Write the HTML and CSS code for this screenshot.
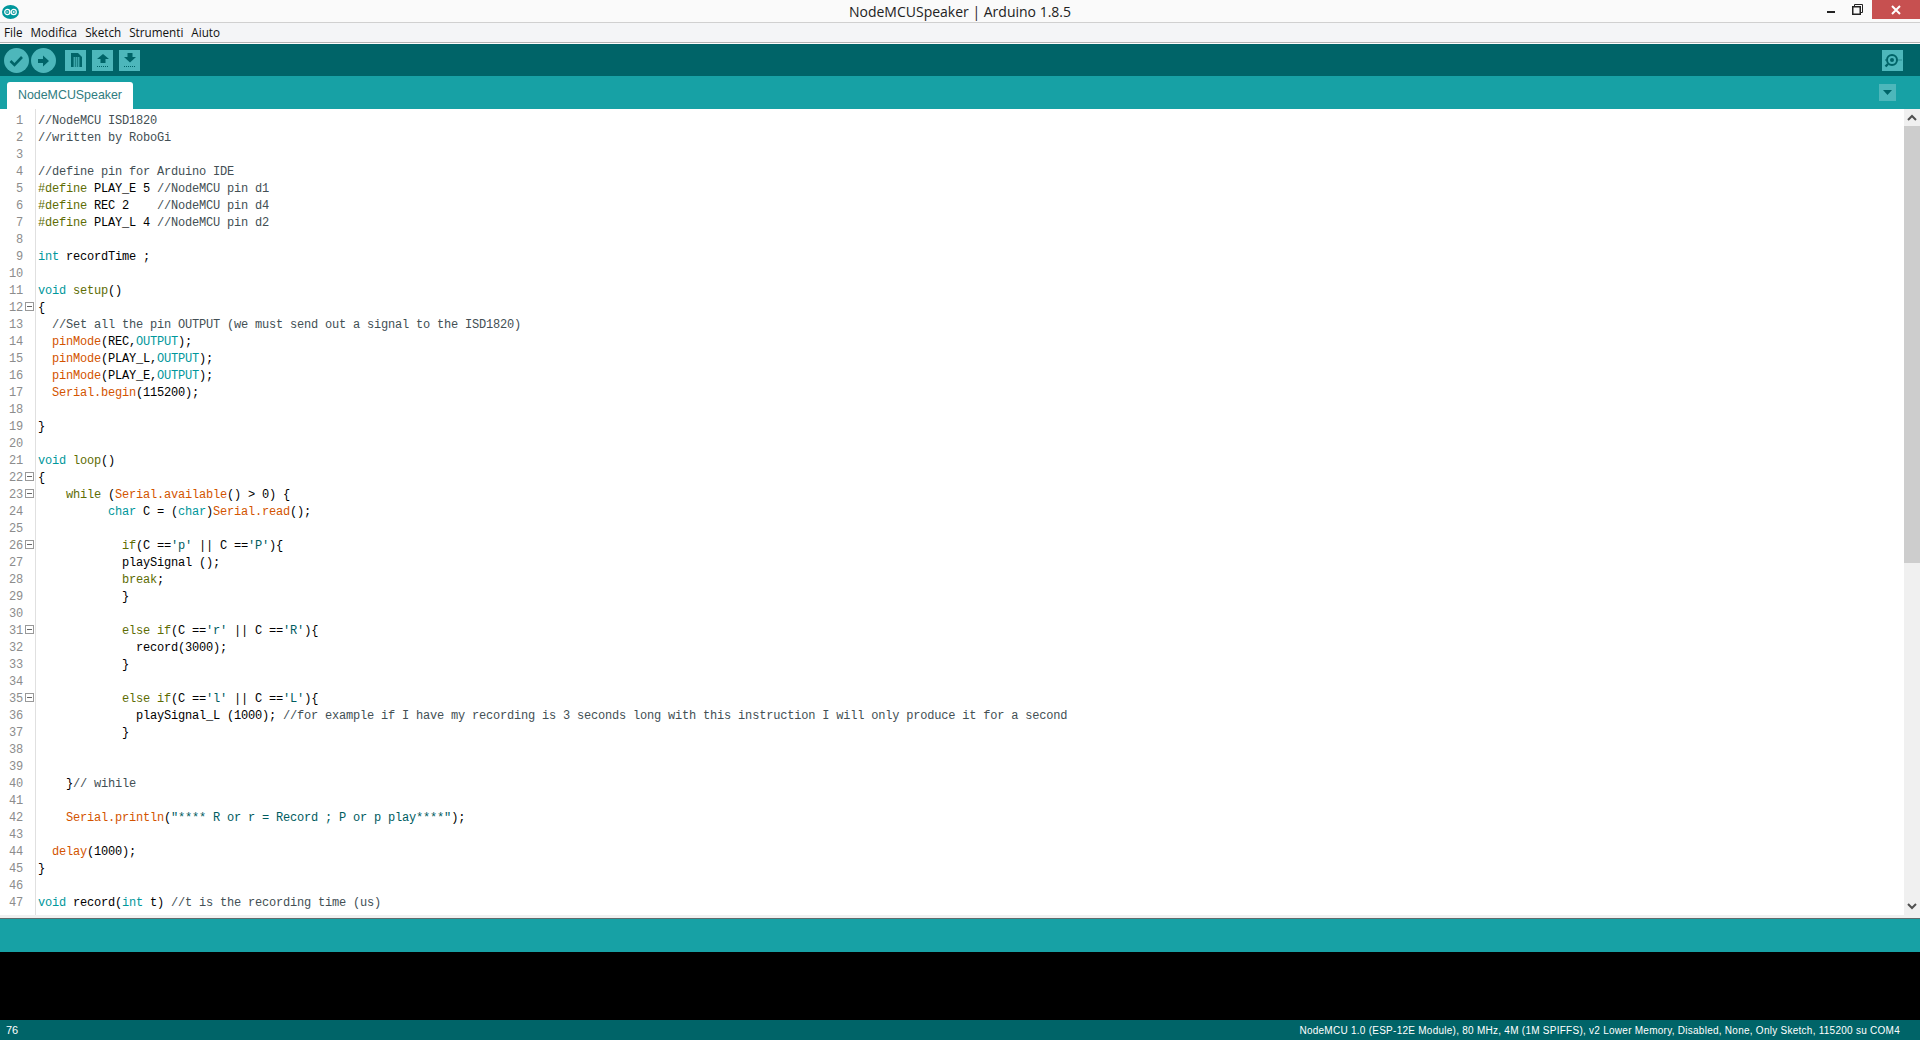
FILE: index.html
```html
<!DOCTYPE html>
<html lang="en">
<head>
    <meta charset="UTF-8">
    <meta name="viewport" content="width=device-width, initial-scale=1.0">
    <link rel="stylesheet" href="styles.css">
    <title>NodeMCUSpeaker | Arduino 1.8.5</title>
</head>
<body>

    <div class="titlebar">
        <div class="title-left">
            <svg class="app-logo" width="17" height="14" viewBox="0 0 17 14">
                <ellipse cx="8.5" cy="7" rx="8.5" ry="7" fill="#00979c"/>
                <circle cx="5.3" cy="7" r="2.6" fill="none" stroke="#fff" stroke-width="1.2"/>
                <circle cx="11.7" cy="7" r="2.6" fill="none" stroke="#fff" stroke-width="1.2"/>
                <path d="M4.2 7h2.2M10.6 7h2.2M11.7 5.9v2.2" stroke="#fff" stroke-width="0.8"/>
            </svg>
        </div>
        <div class="title-text">NodeMCUSpeaker | Arduino 1.8.5</div>
        <div class="window-controls">
            <span class="win-min"></span>
            <svg class="win-restore" width="11" height="11" viewBox="0 0 11 11">
                <path d="M2.5 2.5V.5h8v8h-2" fill="none" stroke="#222" stroke-width="1"/>
                <rect x="0.75" y="2.75" width="7.5" height="7.5" fill="none" stroke="#222" stroke-width="1.5"/>
            </svg>
            <span class="win-close">
                <svg width="10" height="10" viewBox="0 0 10 10">
                    <path d="M1 1l8 8M9 1l-8 8" stroke="#fff" stroke-width="2"/>
                </svg>
            </span>
        </div>
    </div>

    <div class="menubar">
        <span class="menu-item">File</span>
        <span class="menu-item">Modifica</span>
        <span class="menu-item">Sketch</span>
        <span class="menu-item">Strumenti</span>
        <span class="menu-item">Aiuto</span>
    </div>

    <div class="toolbar">
        <div class="tool round">
            <svg width="25" height="25" viewBox="0 0 25 25"><path d="M6.500 13l4 4 7.500-8" fill="none" stroke="#006468" stroke-width="2.600"/></svg>
        </div>
        <div class="tool round">
            <svg width="25" height="25" viewBox="0 0 25 25"><path d="M7 11h5V7.500l6 5.500-6 5.500V15H7z" fill="#006468"/></svg>
        </div>
        <div class="tool square first-square">
            <svg width="21" height="21" viewBox="0 0 21 21">
                <path d="M6 3h7l4 4v10H6z" fill="#006468"/>
                <path d="M8 8h7M8 10h7M8 12h7M8 14h7M8 16h7M9.500 7v10M11.500 7v10M13.500 7v10" stroke="#4db7bb" stroke-width="0.700"/>
            </svg>
        </div>
        <div class="tool square">
            <svg width="21" height="21" viewBox="0 0 21 21">
                <path d="M11 4l6 5h-3.500v4h-5V9H5z" fill="#006468"/>
                <path d="M5 16.500h12" stroke="#006468" stroke-width="1" stroke-dasharray="1 1"/>
            </svg>
        </div>
        <div class="tool square">
            <svg width="21" height="21" viewBox="0 0 21 21">
                <path d="M8.500 3h5v4H17l-6 5.500L5 7h3.500z" fill="#006468"/>
                <path d="M5 16.500h12" stroke="#006468" stroke-width="1" stroke-dasharray="1 1"/>
            </svg>
        </div>
        <div class="tool square monitor">
            <svg width="21" height="21" viewBox="0 0 21 21">
                <circle cx="10" cy="10" r="5" fill="none" stroke="#006468" stroke-width="2"/>
                <circle cx="10" cy="10" r="2" fill="#006468"/>
                <path d="M6 14l-2.500 2.500" stroke="#006468" stroke-width="2.400"/>
                <path d="M3 10h1M16.500 10h4" stroke="#006468" stroke-width="1" stroke-dasharray="1 1"/>
            </svg>
        </div>
    </div>

    <div class="tabbar">
        <div class="tab">NodeMCUSpeaker</div>
        <div class="tab-menu">
            <svg width="17" height="17" viewBox="0 0 17 17"><path d="M4 6h9l-4.500 5z" fill="#006468"/></svg>
        </div>
    </div>

    <div class="editor">
        <div class="gutter">
            <div class="num">1</div>
            <div class="num">2</div>
            <div class="num">3</div>
            <div class="num">4</div>
            <div class="num">5</div>
            <div class="num">6</div>
            <div class="num">7</div>
            <div class="num">8</div>
            <div class="num">9</div>
            <div class="num">10</div>
            <div class="num">11</div>
            <div class="num fold">12</div>
            <div class="num">13</div>
            <div class="num">14</div>
            <div class="num">15</div>
            <div class="num">16</div>
            <div class="num">17</div>
            <div class="num">18</div>
            <div class="num">19</div>
            <div class="num">20</div>
            <div class="num">21</div>
            <div class="num fold">22</div>
            <div class="num fold">23</div>
            <div class="num">24</div>
            <div class="num">25</div>
            <div class="num fold">26</div>
            <div class="num">27</div>
            <div class="num">28</div>
            <div class="num">29</div>
            <div class="num">30</div>
            <div class="num fold">31</div>
            <div class="num">32</div>
            <div class="num">33</div>
            <div class="num">34</div>
            <div class="num fold">35</div>
            <div class="num">36</div>
            <div class="num">37</div>
            <div class="num">38</div>
            <div class="num">39</div>
            <div class="num">40</div>
            <div class="num">41</div>
            <div class="num">42</div>
            <div class="num">43</div>
            <div class="num">44</div>
            <div class="num">45</div>
            <div class="num">46</div>
            <div class="num">47</div>
        </div>
<pre class="code"><i>//NodeMCU ISD1820</i>
<i>//written by RoboGi</i>

<i>//define pin for Arduino IDE</i>
<u>#define</u> PLAY_E 5 <i>//NodeMCU pin d1</i>
<u>#define</u> REC 2    <i>//NodeMCU pin d4</i>
<u>#define</u> PLAY_L 4 <i>//NodeMCU pin d2</i>

<b>int</b> recordTime ;

<b>void</b> <u>setup</u>()
{
  <i>//Set all the pin OUTPUT (we must send out a signal to the ISD1820)</i>
  <em>pinMode</em>(REC,<b>OUTPUT</b>);
  <em>pinMode</em>(PLAY_L,<b>OUTPUT</b>);
  <em>pinMode</em>(PLAY_E,<b>OUTPUT</b>);
  <em>Serial.begin</em>(115200);

}

<b>void</b> <u>loop</u>()
{
    <u>while</u> (<em>Serial.available</em>() &gt; 0) {
          <b>char</b> C = (<b>char</b>)<em>Serial.read</em>();

            <u>if</u>(C ==<s>'p'</s> || C ==<s>'P'</s>){
            playSignal ();
            <u>break</u>;
            }

            <u>else</u> <u>if</u>(C ==<s>'r'</s> || C ==<s>'R'</s>){
              record(3000);
            }

            <u>else</u> <u>if</u>(C ==<s>'l'</s> || C ==<s>'L'</s>){
              playSignal_L (1000); <i>//for example if I have my recording is 3 seconds long with this instruction I will only produce it for a second</i>
            }


    }<i>// wihile</i>

    <em>Serial.println</em>(<s>"**** R or r = Record ; P or p play****"</s>);

  <em>delay</em>(1000);
}

<b>void</b> record(<b>int</b> t) <i>//t is the recording time (us)</i>
</pre>
        <div class="scrollbar">
            <div class="scroll-btn">
                <svg width="16" height="17" viewBox="0 0 16 17"><path d="M4 11l4-4 4 4" fill="none" stroke="#505050" stroke-width="2"/></svg>
            </div>
            <div class="scroll-thumb"></div>
            <div class="scroll-track"></div>
            <div class="scroll-btn">
                <svg width="16" height="17" viewBox="0 0 16 17"><path d="M4 6l4 4 4-4" fill="none" stroke="#505050" stroke-width="2"/></svg>
            </div>
        </div>
    </div>

    <div class="editor-foot"></div>
    <div class="message-bar"></div>
    <div class="console"></div>

    <div class="statusbar">
        <span class="line-no">76</span>
        <span class="board">NodeMCU 1.0 (ESP-12E Module), 80 MHz, 4M (1M SPIFFS), v2 Lower Memory, Disabled, None, Only Sketch, 115200 su COM4</span>
    </div>

</body>
</html>
```
FILE: styles.css
```css
html, body {
    height: 100%;
}

body {
    margin: 0;
    padding: 0;
    background-color: #fff;
    font-family: "Liberation Sans", Arial, sans-serif;
    display: flex;
    flex-direction: column;
    height: 1040px;
    overflow: hidden;
}

.titlebar {
    display: grid;
    grid-template-columns: 1fr auto 1fr;
    align-items: start;
    height: 22px;
    flex: none;
    background-color: #fafafa;
    border-bottom: 1px solid #d0d0d0;
}

.title-left {
    padding: 5px 0 0 2px;
}

.app-logo {
    display: block;
}

.title-text {
    font-family: "Open Sans", sans-serif;
    font-size: 14px;
    line-height: 23px;
    color: #222;
}

.window-controls {
    display: flex;
    justify-content: flex-end;
    align-items: flex-start;
}

.win-min {
    width: 8px;
    height: 2px;
    margin-top: 11px;
    background-color: #222;
}

.win-restore {
    margin: 4px 9px 0 17px;
}

.win-close {
    display: flex;
    align-items: center;
    justify-content: center;
    width: 48px;
    height: 19px;
    background-color: #c75050;
}

.menubar {
    display: flex;
    gap: 8px;
    height: 19px;
    flex: none;
    padding-left: 4px;
    background-color: #f4f5f7;
    border-bottom: 1px solid #b4b4b4;
}

.menu-item {
    font-family: "Open Sans", sans-serif;
    font-size: 11.700px;
    line-height: 19px;
    color: #111;
}

.toolbar {
    display: flex;
    align-items: center;
    height: 32px;
    flex: none;
    padding: 0 17px 0 4px;
    background-color: #006468;
    border-top: 1px solid #fff;
}

.tool {
    background-color: #4db7bb;
    line-height: 0;
}

.tool.round {
    width: 25px;
    height: 25px;
    border-radius: 50%;
    margin-right: 2px;
}

.tool.square {
    width: 21px;
    height: 21px;
    margin-right: 6px;
    margin-top: 1px;
}

.first-square {
    margin-left: 7px;
}

.tool.monitor {
    margin-left: auto;
    margin-right: 0;
}

.tabbar {
    display: flex;
    justify-content: space-between;
    height: 33px;
    flex: none;
    background-color: #17a1a5;
    padding: 0 24px 0 7px;
    box-sizing: border-box;
}

.tab {
    width: 126px;
    height: 27px;
    margin-top: 6px;
    background-color: #fff;
    border-radius: 3px 3px 0 0;
    font-size: 12.400px;
    line-height: 27px;
    text-align: center;
    color: #2f7c80;
}

.tab-menu {
    width: 17px;
    height: 17px;
    margin-top: 8px;
    background-color: #4db7bb;
    line-height: 0;
}

.editor {
    display: flex;
    height: 806px;
    flex: none;
    overflow: hidden;
}

.gutter {
    width: 35px;
    flex: none;
    padding-top: 4px;
    border-right: 1px solid #e0e0e0;
    box-sizing: content-box;
    height: 802px;
}

.num {
    position: relative;
    height: 17px;
    width: 23px;
    font-family: "Liberation Mono", monospace;
    font-size: 12px;
    letter-spacing: -0.200px;
    line-height: 17px;
    text-align: right;
    color: #8c8c8c;
}

/* fold marker sits next to the number */
.fold::after {
    content: "";
    position: absolute;
    left: 25px;
    top: 2px;
    width: 7px;
    height: 7px;
    border: 1px solid #999;
    background: linear-gradient(#666, #666) center / 5px 1px no-repeat #fff;
}

.code {
    flex: 1;
    margin: 0;
    padding: 4px 0 0 2px;
    font-family: "Liberation Mono", monospace;
    font-size: 12px;
    letter-spacing: -0.200px;
    line-height: 17px;
    color: #000;
    overflow: hidden;
}

.code i {
    font-style: normal;
    color: #434f54;
}

.code u {
    text-decoration: none;
    color: #5e6d03;
}

.code b {
    font-weight: normal;
    color: #00979c;
}

.code em {
    font-style: normal;
    color: #d35400;
}

.code s {
    text-decoration: none;
    color: #005c5f;
}

.scrollbar {
    display: flex;
    flex-direction: column;
    width: 16px;
    flex: none;
    background-color: #f0f0f0;
}

.scroll-btn {
    height: 17px;
    flex: none;
    line-height: 0;
}

.scroll-thumb {
    height: 437px;
    flex: none;
    background-color: #cdcdcd;
}

.scroll-track {
    flex: 1;
}

.editor-foot {
    height: 3px;
    flex: none;
    background-color: #f0f0f0;
    border-bottom: 1px solid #5f6b6c;
}

.message-bar {
    height: 33px;
    flex: none;
    background-color: #17a1a5;
}

.console {
    flex: 1;
    background-color: #000;
}

.statusbar {
    display: flex;
    justify-content: space-between;
    align-items: center;
    height: 20px;
    flex: none;
    padding: 0 20px 0 6px;
    background-color: #006468;
    color: #fff;
}

.line-no {
    font-size: 11px;
}

.board {
    font-size: 10px;
    letter-spacing: 0.260px;
}
```
